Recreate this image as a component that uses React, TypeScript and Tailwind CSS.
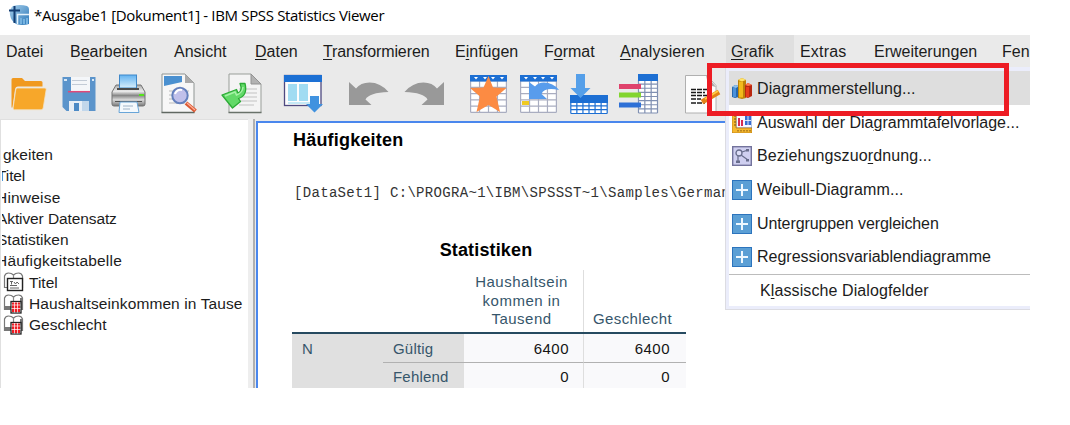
import type { ReactNode } from "react";

function Tool({ x, w, children }: { x: number; w: number; children: ReactNode }) {
  return (
    <svg width={w} height={52} viewBox={`${x} 67 ${w} 52`} className="shrink-0">
      {children}
    </svg>
  );
}

const U = ({ children }: { children: ReactNode }) => (
  <span className="underline decoration-1 underline-offset-2">{children}</span>
);

function Grid({ x, y, w, h, cols, rows, stroke }: { x: number; y: number; w: number; h: number; cols: number; rows: number; stroke: string }) {
  const d: string[] = [];
  for (let i = 0; i <= cols; i++) d.push(`M${x + (w * i) / cols} ${y}v${h}`);
  for (let i = 0; i <= rows; i++) d.push(`M${x} ${y + (h * i) / rows}h${w}`);
  return <path d={d.join("")} stroke={stroke} strokeWidth="1.2" fill="none" />;
}

function CalendarGrid({ x }: { x: number }) {
  return (
    <>
      <rect x={x} y="75" width="37" height="38" fill="#fff" />
      <Grid x={x + 0.6} y={81} w={35.8} h={31.4} cols={4} rows={5} stroke="#a9adc0" />
      <rect x={x} y="75" width="37" height="6.5" fill="#1d6fd3" />
      {[4, 13, 21, 30].map((o) => (
        <path key={o} d={`M${x + o} 77h4l-2 2.6z`} fill="#fff" />
      ))}
    </>
  );
}

function Toolbar() {
  return (
    <div className="flex h-[52px] w-[1030px] overflow-hidden bg-[#eaeaea]">
      <Tool x={0} w={54}>
        <path d="M11.5 79.5q0-1.5 1.500-1.500h9l3 3h16q1.500 0 1.500 1.500v4H18q-2.500 0-3 3l-2.500 18h-1z" fill="#f0991f" />
        <path d="M17.500 88H45q1.500 0 1.200 1.500l-3 18.500q-.4 1.800-2 1.800H14.500q-1.700 0-1.400-1.800l2.600-18q.3-2 1.800-2z" fill="#f7a72a" stroke="#f3e3c8" strokeWidth=".8" />
      </Tool>
      <Tool x={54} w={50}>
        <path d="M62.500 77h33v34h-29l-4-4z" fill="#5b94cb" />
        <path d="M71 77h19v14.500H71z" fill="#f4f6f9" />
        <path d="M68 91.700h22" stroke="#e04878" strokeWidth="1.500" />
        <path d="M72 80.500h15M72 84.500h15" stroke="#c3cbd6" />
        <path d="M64 79h3v2h-3zM92 79h2v2h-2z" fill="#d8e8f7" />
        <path d="M69 101h20v10H69z" fill="#e9eff6" />
        <path d="M74 103h5v8h-5z" fill="#4d8ac5" />
        <path d="M82 101h7v10h-7z" fill="#c2d7eb" />
      </Tool>
      <Tool x={104} w={50}>
        <defs>
          <linearGradient id="printer" x1="0" y1="0" x2="0" y2="1">
            <stop offset="0" stopColor="#aaa" />
            <stop offset=".3" stopColor="#ececec" />
            <stop offset=".5" stopColor="#888" />
            <stop offset=".7" stopColor="#d8d8d8" />
            <stop offset="1" stopColor="#777" />
          </linearGradient>
          <linearGradient id="sheet" x1="0" y1="0" x2="0" y2="1">
            <stop offset="0" stopColor="#62b2f0" />
            <stop offset="1" stopColor="#d9effc" />
          </linearGradient>
        </defs>
        <path d="M116 85h25l4 7v12q0 2-2 2h-29q-2 0-2-2V92z" fill="url(#printer)" stroke="#747474" />
        <rect x="119.500" y="75" width="17" height="13" fill="url(#sheet)" stroke="#3f88c9" />
        <path d="M117 88h22v2h-22z" fill="#4b4b4b" />
        <path d="M115 101.500h27" stroke="#555" />
        <path d="M139 95h5" stroke="#55e41b" strokeWidth="2" />
        <path d="M120 102h17l2 10.500h-20z" fill="#f4f9fd" stroke="#68a5d8" />
        <path d="M123 106h10M123 109h7" stroke="#9eb2c6" />
      </Tool>
      <Tool x={154} w={56}>
        <path d="M162 74h23l9 9v29.500h-32z" fill="#f7f7f7" stroke="#8f9593" />
        <path d="M185 74v9h9z" fill="#aaa" />
        <path d="M164 76h18v6l-18 4z" fill="#4a90d0" />
        <path d="M169 91h20M169 95h18M169 99h18M169 103h16" stroke="#bbb" />
        <path d="M161.500 112.500h33" stroke="#606862" strokeWidth="1.500" />
        <path d="M186 103l9.500 8" stroke="#db5933" strokeWidth="4" />
        <path d="M187 103l8 7" stroke="#ffb19a" strokeWidth="1.200" />
        <circle cx="180" cy="95.500" r="7.700" fill="#c0c0ea" stroke="#6480bd" strokeWidth="2" />
        <path d="M175 94q2-5 7-4" stroke="#fff" strokeWidth="2" fill="none" />
      </Tool>
      <Tool x={210} w={65}>
        <path d="M229 74h22l10 10v28.500h-32z" fill="#f4f4f4" stroke="#999e99" />
        <path d="M251 74v10h10z" fill="#b2b2b2" stroke="#929292" />
        <path d="M239 89h18M239 93h18M239 97h18M239 101h18M239 105h15" stroke="#c2c2c2" />
        <path d="M228.500 112.500h33" stroke="#69726a" strokeWidth="1.500" />
        <path d="M240 83.500h5q3 12-6.500 15l2 3-8 6.500-10.500-13 14.500-5.500 1.500 3.500q5-2 2-9.500z" fill="#62d968" stroke="#2bab35" strokeWidth="1.300" strokeLinejoin="round" />
        <path d="M225 96l10-4 1.500 3q6-2 6.500-8" stroke="#a5f2a6" strokeWidth="1.500" fill="none" />
      </Tool>
      <Tool x={275} w={60}>
        <rect x="284.500" y="75.500" width="36.500" height="30" fill="#fdfdfd" stroke="#4e4980" strokeWidth="1.300" />
        <path d="M284 75h38v7h-38z" fill="#1c70d4" />
        <path d="M288 84h9v17h-9zM299 84h9v17h-9z" fill="#a1dcf2" />
        <path d="M288 103h22" stroke="#c5e9f6" strokeWidth="2" />
        <path d="M310 96h9v8h4l-8.500 8.500-8.500-8.500h4z" fill="#4092df" />
      </Tool>
      <Tool x={335} w={62}>
        <path d="M349 82v23h22.500l-6-5.500q3.500-7 23-7.500-8-9.500-19-9.500-9 0-13.500 6z" fill="#999" />
      </Tool>
      <Tool x={397} w={60}>
        <path d="M444 82v23h-22.500l6-5.500q-3.500-7-23-7.500 8-9.500 19-9.500 9 0 13.500 6z" fill="#999" />
      </Tool>
      <Tool x={457} w={57}>
        <CalendarGrid x={470} />
        <path d="M488.500 76l4.500 11.500 13.500.5-10 8.500 3.500 15.500-11.500-7-12 7 3.500-15.500-10-8.500 13.500-.5z" fill="#fc8b43" />
      </Tool>
      <Tool x={514} w={50}>
        <CalendarGrid x={520} />
        <path d="M522 101h7v4h-7z" fill="#f0ca22" />
        <path d="M529 82l6 4.500q3-4 9-4 9 0 15 7.500-15-3-17.500 4l5.500 5H529z" fill="#589cec" />
      </Tool>
      <Tool x={564} w={50}>
        <path d="M570.500 95.500h36.500v18h-36.500z" fill="#fff" />
        <Grid x={570.800} y={102} w={36.400} h={11.500} cols={6} rows={3} stroke="#1d6fd3" />
        <path d="M570 95h38v8h-38z" fill="#1d6fd3" />
        <path d="M576 74h9v14h5.500L580.500 98 570.500 88h5.500z" fill="#559fe9" />
      </Tool>
      <Tool x={614} w={58}>
        <rect x="638" y="74" width="20" height="39" fill="#fff" />
        <Grid x={638.500} y={80} w={19} h={33} cols={3} rows={8} stroke="#8090b2" />
        <path d="M638 74h20v7h-20z" fill="#1d6fd3" />
        <path d="M619 84h22v5h-22z" fill="#df426c" />
        <path d="M619 92.500h22v5h-22z" fill="#82d52f" />
        <path d="M619 102.500h22v5h-22z" fill="#2e70d6" />
      </Tool>
      <Tool x={672} w={54}>
        <path d="M685.500 75.500H707l9 10V113h-30.500z" fill="#fdfdfd" stroke="#b0b0b0" />
        <path d="M706 75l10 12-8-2z" fill="#aaa" />
        <path d="M691 89.500h18M691 92.500h14M691 95.500h16M691 99h10M691 103h14" stroke="#1a1a1a" strokeWidth="1.500" strokeDasharray="5 1" />
        <path d="M702 102l17-10" stroke="#e38216" strokeWidth="5" />
        <path d="M705 99l13-8" stroke="#ffcb45" strokeWidth="2" />
      </Tool>
    </div>
  );
}

function AppLogo() {
  return (
    <svg width="20" height="20" viewBox="0 0 20 20" className="shrink-0">
      <defs>
        <linearGradient id="logo" x1="0" y1="0" x2="1" y2="1">
          <stop offset="0" stopColor="#a8d0ec" />
          <stop offset="1" stopColor="#2a77b8" />
        </linearGradient>
      </defs>
      <path d="M4 1q7-2 14 0 2 1 2 3v15q-7 2-13 0-5-3-6-9Q0 4 4 1z" fill="url(#logo)" />
      <path d="M0 5.500h11M5.500 1v17" stroke="#133d72" strokeWidth="2" />
      <path d="M8.500 19v-9.500H20" stroke="#e5f3fc" strokeWidth="1.500" fill="none" />
      <path d="M11 13h2v6h-2zM14 14h2v5h-2zM17 13h2v6h-2z" fill="#76b3e0" />
    </svg>
  );
}

function BookIcon({ table }: { table?: boolean }) {
  return (
    <svg width="21" height="20" viewBox="0 0 21 20" className="shrink-0">
      <path d="M1.500 15.500V4q1-3 4-3 3 0 5 2 2-2 5-2 3 0 4 3v11.500z" fill="#fff" stroke="#777" strokeWidth="1.200" />
      <path d="M10.500 3v7" stroke="#888" strokeWidth="1.200" />
      {table ? (
        <>
          <path d="M1 12h19v4H1zM17 4h3v11h-3z" fill="#777" />
          <rect x="8" y="7.500" width="10" height="11.500" fill="#fff" stroke="#222" strokeWidth="1.300" />
          <path d="M9 8.500h8v9.500H9z" fill="#ed1c24" />
          <path d="M11.500 8v10.500M14.500 8v10.500M8.500 11h9M8.500 14.500h9" stroke="#fff" strokeWidth=".7" />
        </>
      ) : (
        <>
          <rect x="4.500" y="6.500" width="15" height="12" fill="#fff" stroke="#222" strokeWidth="1.400" />
          <path d="M7 9.500h3M8.500 9.500v3M11 10l1.500 2L14 10l2 2M7 13.500h7M7 16h9" stroke="#666" fill="none" />
        </>
      )}
    </svg>
  );
}

function Plus() {
  return (
    <svg width="20" height="20" viewBox="0 0 20 20">
      <rect x=".5" y=".5" width="19" height="19" fill="#5b9fd5" stroke="#2c74bd" />
      <path d="M4 10h12M10 4v12" stroke="#eef8ff" strokeWidth="2" />
    </svg>
  );
}

function BarsIcon() {
  return (
    <svg width="20" height="21" viewBox="0 0 20 21">
      <path d="M0 9l3-2 4 1v11l-4 1-3-1z" fill="#2767ac" />
      <path d="M0 9l3-2 4 1-3 2z" fill="#8fc1ee" />
      <path d="M1 10h3v9H1z" fill="#4b91da" />
      <path d="M6 2l4-2 4 2v18l-4 1-4-1z" fill="#bd8208" />
      <path d="M6 2l4-2 4 2-4 1.500z" fill="#ffe36a" />
      <path d="M7 3.500h4v16H7z" fill="#f2b91b" />
      <path d="M13 7l3-2 4 2v11l-4 2-3-1z" fill="#b92710" />
      <path d="M13 7l3-2 4 2-4 1z" fill="#ff7a4c" />
      <path d="M14 9h3v10h-3z" fill="#e83d1c" />
    </svg>
  );
}

function TemplateIcon() {
  return (
    <svg width="20" height="20" viewBox="0 0 20 20">
      <rect x="4" width="16" height="15" fill="#f7f8ff" stroke="#6c90cf" />
      <path d="M6 5h2v8H6zM9 7h2v6H9z" fill="#d72b50" />
      <path d="M13 3h6v9h-6z" fill="#356dd2" />
      <path d="M13 7.500h6M16 3v9" stroke="#fff" strokeWidth=".8" />
      <path d="M0 0h4v15h16v5H0z" fill="#f6b82d" stroke="#b97813" strokeWidth=".8" />
      <path d="M2 3h2M2 6h2M2 9h2M2 12h2M6 17v1.500M9 17v1.500M12 17v1.500M15 17v1.500M18 17v1.500" stroke="#7b5011" />
    </svg>
  );
}

function RelationIcon() {
  return (
    <svg width="20" height="20" viewBox="0 0 20 20">
      <rect x=".7" y=".7" width="18.600" height="18.600" fill="#cfcff0" stroke="#73739c" strokeWidth="1.400" />
      <path d="M10 6l6-2M9 9l7 5M6 10v6" stroke="#686d8c" strokeWidth="1.200" />
      <circle cx="7" cy="7" r="3" fill="#dedef8" stroke="#686d8c" strokeWidth="1.300" />
      <path d="M14 3h3v2.500h-3zM14 13h3v2.500h-3zM4 14.500h4V17H4z" fill="#686d8c" />
    </svg>
  );
}

function MenuBar() {
  return (
    <div className="flex h-8 w-[1030px] overflow-hidden whitespace-nowrap bg-[#eaeaea] pl-1.5 text-base leading-[34px] text-[#1c1c1c]">
      <span className="w-[64px] shrink-0">Datei</span>
      <span className="w-[104px] shrink-0">B<U>e</U>arbeiten</span>
      <span className="w-[81px] shrink-0">Ansicht</span>
      <span className="w-[68px] shrink-0"><U>D</U>aten</span>
      <span className="w-[132px] shrink-0 tracking-[-0.1px]"><U>T</U>ransformieren</span>
      <span className="w-[89px] shrink-0">E<U>i</U>nfügen</span>
      <span className="w-[76px] shrink-0">F<U>o</U>rmat</span>
      <span className="w-[106px] shrink-0 tracking-[0.1px]"><U>A</U>nalysieren</span>
      <span className="w-[68px] shrink-0 bg-[#dfdfdf] pl-[5px]"><U>G</U>rafik</span>
      <span className="w-[80px] shrink-0 pl-[6px] tracking-[0.2px]">Extras</span>
      <span className="w-[128px] shrink-0">Erweiterungen</span>
      <span>Fen</span>
    </div>
  );
}

function MenuItem({ icon, active, children }: { icon: ReactNode; active?: boolean; children: ReactNode }) {
  return (
    <div className={active ? "flex h-[33.700px] items-center bg-[#dedede] pl-[3px] pt-[2px]" : "flex h-[33.700px] items-center pl-[3px] pt-[2px]"}>
      {icon}
      <span className="ml-[5px]">{children}</span>
    </div>
  );
}

function GrafikMenu() {
  return (
    <div className="absolute left-[725px] top-[67px] h-[243px] w-[305px] overflow-hidden whitespace-nowrap border-b border-l border-[#dcdce2] bg-[#ebedfb] pb-[3px] pl-[3px] pt-1 text-base text-[#1c1c1c]">
      <div className="h-full bg-white">
        <MenuItem active icon={<BarsIcon />}><span className="tracking-[0.1px]">Diagrammerstellung...</span></MenuItem>
        <MenuItem icon={<TemplateIcon />}>Auswahl der Dia<U>g</U>rammtafelvorlage...</MenuItem>
        <MenuItem icon={<RelationIcon />}><span className="tracking-[0.1px]">Beziehungszuo<U>r</U>dnung...</span></MenuItem>
        <MenuItem icon={<Plus />}><span className="tracking-[0.1px]">Weibull-Diagramm...</span></MenuItem>
        <MenuItem icon={<Plus />}><span className="tracking-[-0.1px]">Untergruppen vergleichen</span></MenuItem>
        <MenuItem icon={<Plus />}>Regressionsvariablendiagramme</MenuItem>
        <div className="mt-px h-px bg-[#bcbcbc]" />
        <div className="pl-[31px] leading-[32px] tracking-[0.1px]">K<U>l</U>assische Dialogfelder</div>
      </div>
    </div>
  );
}

function Outline() {
  return (
    <div className="flex w-[248px] shrink-0 flex-col overflow-hidden whitespace-nowrap border-l border-t border-[#e0e0e0] bg-white pt-6 text-[15.500px] leading-[21.300px] text-[#1c1c1c]">
      <span className="ml-[2px]">gkeiten</span>
      <div className="ml-px flex flex-col overflow-hidden">
        <span className="ml-[-5px] tracking-[-0.1px]">Titel</span>
        <span className="ml-[-6px] tracking-[0.2px]">Hinweise</span>
        <span className="ml-[-5px] tracking-[-0.1px]">Aktiver Datensatz</span>
        <span className="ml-[-5px]">Statistiken</span>
        <span className="ml-[-6px] tracking-[0.200px]">Häufigkeitstabelle</span>
      </div>
      <div className="flex items-center gap-[5px] pl-[2px]"><BookIcon />Titel</div>
      <div className="flex items-center gap-[5px] pl-[2px] tracking-[0.100px]"><BookIcon table />Haushaltseinkommen in Tause</div>
      <div className="flex items-center gap-[5px] pl-[2px]"><BookIcon table />Geschlecht</div>
    </div>
  );
}

function StatsTable() {
  return (
    <div className="ml-[34px] w-[394px] text-[15px] tracking-[0.500px] text-[#36566b]">
      <div className="grid h-[64px] grid-cols-[172px_120px_102px] items-end border-b-2 border-[#264a60] text-center leading-[18.700px]">
        <span />
        <span className="h-full border-r border-[#dedede] pr-1 pt-[3px]">Haushaltsein<br />kommen in<br />Tausend</span>
        <span className="pb-[3px] pr-[5px] tracking-[0.400px]">Geschlecht</span>
      </div>
      <div className="grid grid-cols-[91px_81px_120px_102px] leading-[27px]">
        <span className="row-span-2 bg-[#e0e0e0] pl-2.5 pt-px">N</span>
        <span className="border-b border-[#b1b1b1] bg-[#e0e0e0] pl-2.5 pt-px tracking-[0.200px]">Gültig</span>
        <span className="border-b border-r border-[#b1b1b1] border-r-[#dedede] bg-[#f9f9fb] pr-3.5 pt-px text-right text-[#151515]">6400</span>
        <span className="border-b border-[#b1b1b1] bg-[#f9f9fb] pr-4 pt-px text-right text-[#151515]">6400</span>
        <span className="bg-[#e0e0e0] pl-2.5 tracking-[0.200px]">Fehlend</span>
        <span className="border-r border-[#dedede] bg-[#f9f9fb] pr-3.5 text-right text-[#151515]">0</span>
        <span className="bg-[#f9f9fb] pr-4 text-right text-[#151515]">0</span>
      </div>
    </div>
  );
}

function Output() {
  return (
    <div className="mt-[2px] flex-1 overflow-hidden border-l-2 border-t-2 border-[#4a87ed] bg-white">
      <h1 className="ml-[35px] mt-[4px] text-lg font-bold leading-[26px] tracking-[0.200px] text-black">Häufigkeiten</h1>
      <p className="ml-[36px] mt-[30px] whitespace-nowrap font-['Liberation_Mono',monospace] text-sm leading-5 tracking-[0.320px] text-[#333]">
        [DataSet1] C:\PROGRA~1\IBM\SPSSST~1\Samples\German
      </p>
      <h2 className="ml-[34px] mt-[34px] w-[388px] text-center text-lg font-bold leading-[26px] tracking-[0.150px] text-black">Statistiken</h2>
      <div className="mt-[7px]"><StatsTable /></div>
    </div>
  );
}

export default function App() {
  return (
    <div className="relative h-[425px] w-[1070px] overflow-hidden bg-white font-['Liberation_Sans',Arial,sans-serif]">
      <header className="flex h-[35px] items-center gap-[5px] pb-[5px] pl-[9px] text-black">
        <AppLogo />
        <span className="whitespace-nowrap font-['Open_Sans',sans-serif] text-[15px] tracking-[-0.340px]">*Ausgabe1 [Dokument1] - IBM SPSS Statistics Viewer</span>
      </header>
      <MenuBar />
      <Toolbar />
      <main className="flex h-[269px] w-[1030px] overflow-hidden bg-[#eaeaea]">
        <Outline />
        <div className="mr-px w-[7px] shrink-0 border-r-2 border-[#b0b0b0] bg-[#eee]" />
        <Output />
      </main>
      <GrafikMenu />
      <div className="absolute left-[707px] top-[63px] h-[53px] w-[302px] border-[5px] border-[#ed1c24]" />
    </div>
  );
}
